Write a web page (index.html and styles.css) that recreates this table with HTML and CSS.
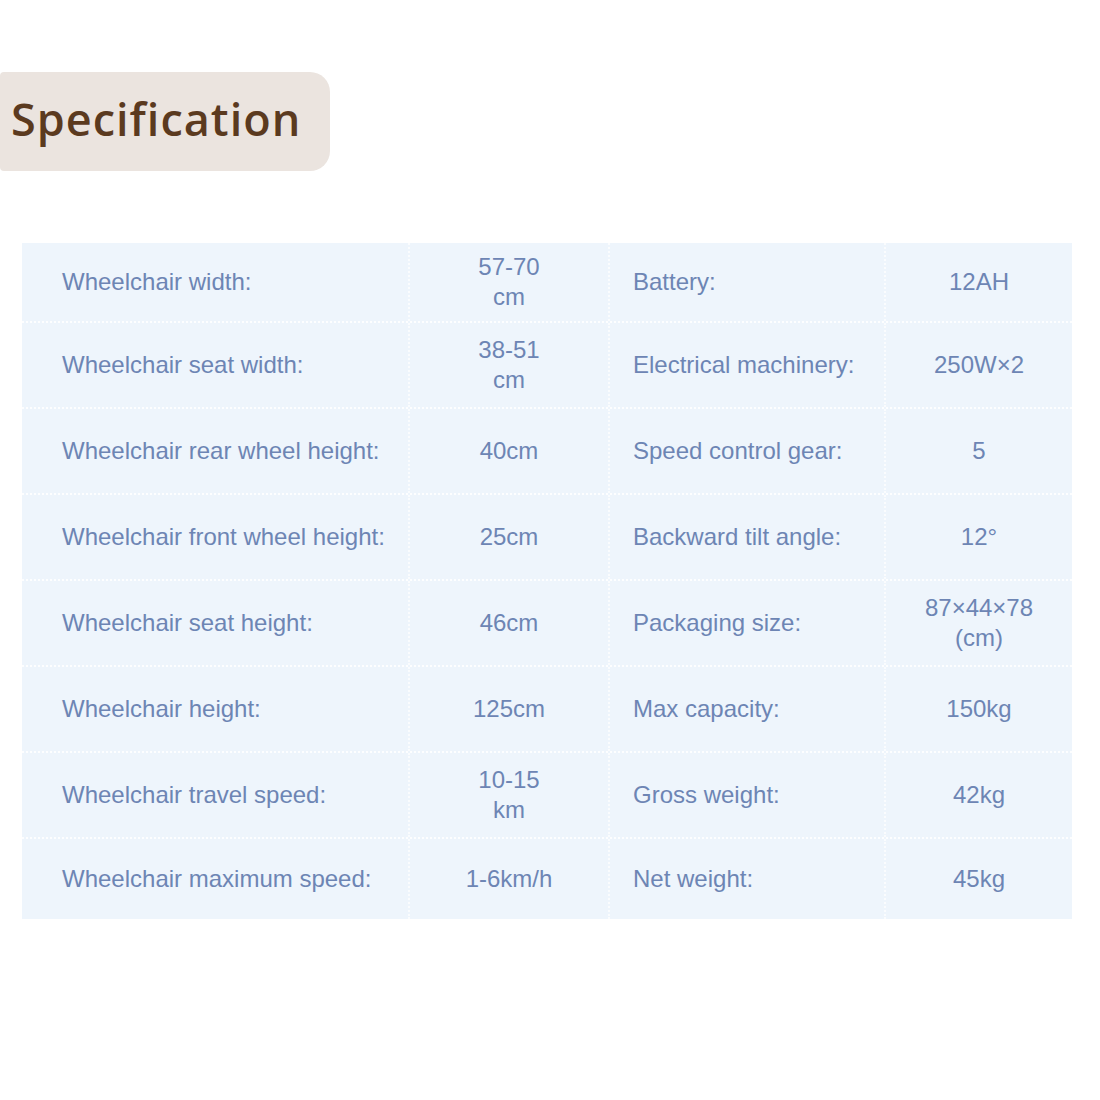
FILE: index.html
```html
<!DOCTYPE html>
<html>
<head>
<meta charset="utf-8">
<link rel="stylesheet" href="styles.css">
</head>
<body>
<div class="page">
  <div class="badge"><h1 class="title">Specification</h1></div>
  <div class="spec">
    <div class="row first">
      <div class="cell label">Wheelchair width:</div>
      <div class="cell value">57-70<br>cm</div>
      <div class="cell label2">Battery:</div>
      <div class="cell value2">12AH</div>
    </div>
    <div class="row">
      <div class="cell label">Wheelchair seat width:</div>
      <div class="cell value">38-51<br>cm</div>
      <div class="cell label2">Electrical machinery:</div>
      <div class="cell value2">250W×2</div>
    </div>
    <div class="row">
      <div class="cell label">Wheelchair rear wheel height:</div>
      <div class="cell value">40cm</div>
      <div class="cell label2">Speed control gear:</div>
      <div class="cell value2">5</div>
    </div>
    <div class="row">
      <div class="cell label">Wheelchair front wheel height:</div>
      <div class="cell value">25cm</div>
      <div class="cell label2">Backward tilt angle:</div>
      <div class="cell value2">12°</div>
    </div>
    <div class="row">
      <div class="cell label">Wheelchair seat height:</div>
      <div class="cell value">46cm</div>
      <div class="cell label2">Packaging size:</div>
      <div class="cell value2">87×44×78<br>(cm)</div>
    </div>
    <div class="row">
      <div class="cell label">Wheelchair height:</div>
      <div class="cell value">125cm</div>
      <div class="cell label2">Max capacity:</div>
      <div class="cell value2">150kg</div>
    </div>
    <div class="row">
      <div class="cell label">Wheelchair travel speed:</div>
      <div class="cell value">10-15<br>km</div>
      <div class="cell label2">Gross weight:</div>
      <div class="cell value2">42kg</div>
    </div>
    <div class="row last">
      <div class="cell label">Wheelchair maximum speed:</div>
      <div class="cell value">1-6km/h</div>
      <div class="cell label2">Net weight:</div>
      <div class="cell value2">45kg</div>
    </div>
  </div>
</div>
</body>
</html>
```

FILE: styles.css
```css
html, body {
  margin: 0;
  padding: 0;
  background: #ffffff;
}

.page {
  width: 1100px;
  height: 1100px;
  padding-top: 72px;
  box-sizing: border-box;
}

.badge {
  width: 330px;
  height: 99px;
  background: #ebe4df;
  border-radius: 4px 20px 20px 4px;
  display: flex;
  align-items: center;
  box-sizing: border-box;
  padding-left: 11px;
  padding-bottom: 7px;
}

.title {
  margin: 0;
  font-family: "Open Sans", "Noto Sans", sans-serif;
  font-weight: 600;
  font-size: 45px;
  letter-spacing: 1px;
  color: #5b3a1f;
}

.spec {
  margin: 72px 0 0 22px;
  width: 1050px;
  background: #eef5fc;
  font-family: "Liberation Sans", Arial, sans-serif;
  font-size: 24px;
  line-height: 30px;
  color: #6d85b4;
}

.row {
  display: grid;
  grid-template-columns: 388px 200px 276px 186px;
  height: 86px;
  border-bottom: 2px dotted rgba(255, 255, 255, 0.85);
  box-sizing: border-box;
}

.row.first {
  height: 80px;
}

.row.last {
  height: 80px;
  border-bottom: none;
}

.cell {
  display: flex;
  align-items: center;
}

.label {
  padding-left: 40px;
  border-right: 2px dotted rgba(255, 255, 255, 0.7);
}

.value {
  justify-content: center;
  text-align: center;
  border-right: 2px dotted rgba(255, 255, 255, 0.7);
}

.label2 {
  padding-left: 23px;
  border-right: 2px dotted rgba(255, 255, 255, 0.7);
}

.value2 {
  justify-content: center;
  text-align: center;
}
```
